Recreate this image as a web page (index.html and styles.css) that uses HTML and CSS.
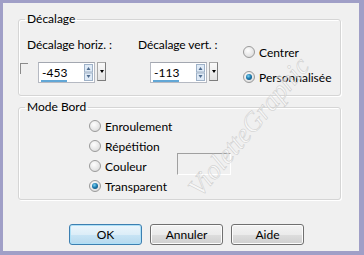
FILE: index.html
```html
<!DOCTYPE html>
<html lang="fr">
<head>
    <meta charset="UTF-8">
    <title>Décalage</title>
    <link rel="stylesheet" href="styles.css">
</head>
<body>
    <div class="dialog">
        <fieldset class="group group-offset">
            <legend>Décalage</legend>
            <div class="offset-row">
                <div class="col col-h">
                    <div class="label">Décalage horiz. :</div>
                    <div class="field-row">
                        <span class="check-corner"></span>
                        <div class="spin">
                            <div class="spin-field">
                                <span class="val">-453</span>
                                <svg class="arrows" width="9" height="17" viewBox="0 0 9 17">
                                    <rect x="0.5" y="0.5" width="8" height="7.5" fill="#dfeaf6" stroke="#9fb2c8"/>
                                    <rect x="0.5" y="9" width="8" height="7.5" fill="#dfeaf6" stroke="#9fb2c8"/>
                                    <path d="M2.5 6 L4.5 3 L6.5 6 Z" fill="#4e6b8e"/>
                                    <path d="M2.5 11 L4.5 14 L6.5 11 Z" fill="#4e6b8e"/>
                                </svg>
                            </div>
                            <span class="drop"><span class="tri"></span></span>
                        </div>
                    </div>
                </div>
                <div class="col col-v">
                    <div class="label">Décalage vert. :</div>
                    <div class="field-row">
                        <div class="spin">
                            <div class="spin-field">
                                <span class="val">-113</span>
                                <svg class="arrows" width="9" height="17" viewBox="0 0 9 17">
                                    <rect x="0.5" y="0.5" width="8" height="7.5" fill="#dfeaf6" stroke="#9fb2c8"/>
                                    <rect x="0.5" y="9" width="8" height="7.5" fill="#dfeaf6" stroke="#9fb2c8"/>
                                    <path d="M2.5 6 L4.5 3 L6.5 6 Z" fill="#4e6b8e"/>
                                    <path d="M2.5 11 L4.5 14 L6.5 11 Z" fill="#4e6b8e"/>
                                </svg>
                            </div>
                            <span class="drop"><span class="tri"></span></span>
                        </div>
                    </div>
                </div>
                <div class="col col-r">
                    <div class="opt opt-wide"><span class="radio"></span>Centrer</div>
                    <div class="opt opt-wide"><span class="radio checked"></span>Personnalisée</div>
                </div>
            </div>
        </fieldset>

        <fieldset class="group group-mode">
            <legend>Mode Bord</legend>
            <div class="mode-list">
                <div class="opt"><span class="radio"></span>Enroulement</div>
                <div class="opt"><span class="radio"></span>Répétition</div>
                <div class="opt"><span class="radio"></span><span class="opt-text">Couleur</span><span class="swatch"></span></div>
                <div class="opt"><span class="radio checked"></span>Transparent</div>
            </div>
        </fieldset>

        <div class="buttons">
            <button class="btn btn-default">OK</button>
            <button class="btn">Annuler</button>
            <button class="btn">Aide</button>
        </div>

        <span class="watermark">VioletteGraphic</span>
    </div>
</body>
</html>
```

FILE: styles.css
```css
body {
    margin: 0;
    font-family: Lato, "Noto Sans", Arial, sans-serif;
    font-size: 12px;
    color: #000;
}
.dialog {
    position: relative;
    width: 364px;
    height: 255px;
    box-sizing: border-box;
    border-style: solid;
    border-color: #a09fc7;
    border-width: 3px 5px 4px 3px;
    background: #f0f0f0;
    padding: 8px 18px 0 15px;
    overflow: hidden;
}
.group {
    margin: 0;
    padding: 0;
    border: 1px solid #d5d5d5;
    border-radius: 3px;
    box-shadow: 1px 1px 0 #fff, inset 1px 1px 0 #fff;
    min-width: 0;
}
.group legend {
    margin-left: 6px;
    padding: 0 2px;
    line-height: 16px;
}
.group-offset {
    padding: 10px 0 10px 0;
}
.offset-row {
    display: flex;
    align-items: flex-start;
}
.label {
    line-height: 16px;
    white-space: nowrap;
    letter-spacing: -0.1px;
}
.col-h {
    width: 119px;
}
.col-h .label {
    margin-left: 8px;
}
.col-v {
    width: 104px;
}
.field-row {
    display: flex;
    align-items: flex-start;
    margin-top: 9px;
}
.col-v .field-row {
    margin-left: 12px;
}
.check-corner {
    width: 7px;
    height: 10px;
    margin: 1px 10px 0 1px;
    border-top: 1px solid #8a8a8a;
    border-left: 1px solid #8a8a8a;
}
.spin {
    display: flex;
    align-items: flex-start;
}
.spin-field {
    width: 57px;
    height: 21px;
    box-sizing: border-box;
    border: 1px solid #b5b9c2;
    border-top-color: #a3a7b0;
    background: #fff;
    display: flex;
    align-items: center;
    justify-content: space-between;
    padding: 0 1px 0 2px;
}
.val {
    display: block;
    line-height: 15px;
    margin-top: 2px;
    border-bottom: 2px solid #62a7d6;
    padding-left: 1px;
}
.arrows {
    display: block;
}
.drop {
    width: 9px;
    height: 19px;
    margin-left: 2px;
    box-sizing: border-box;
    border: 1px solid #a8a8a8;
    border-right-color: #7d7d7d;
    border-bottom-color: #7d7d7d;
    background: linear-gradient(#fafafa, #e2e2e2);
    display: flex;
    align-items: center;
    justify-content: center;
}
.tri {
    width: 0;
    height: 0;
    border-left: 2.5px solid transparent;
    border-right: 2.5px solid transparent;
    border-top: 3px solid #000;
}
.col-r {
    margin-left: 1px;
    margin-top: 7px;
    display: flex;
    flex-direction: column;
    gap: 9px;
}
.opt {
    display: flex;
    align-items: center;
    height: 20px;
    white-space: nowrap;
}
.opt-wide {
    height: 16px;
}
.radio {
    position: relative;
    width: 12px;
    height: 12px;
    box-sizing: border-box;
    margin-right: 4px;
    border-radius: 50%;
    border: 1px solid #9a9a9a;
    background: radial-gradient(circle at 40% 35%, #fefefe 0%, #e6e6e6 60%, #cfcfcf 100%);
}
.radio.checked::after {
    content: "";
    position: absolute;
    left: 2px;
    top: 2px;
    width: 6px;
    height: 6px;
    border-radius: 50%;
    background: radial-gradient(circle at 40% 35%, #7fd3f3 0%, #1d7cb0 45%, #0b3e63 100%);
}
.group-mode {
    margin-top: 3px;
    padding: 1px 0 3px 0;
}
.mode-list {
    padding-left: 70px;
}
.opt-text {
    width: 72px;
}
.swatch {
    width: 54px;
    height: 22px;
    box-sizing: border-box;
    flex-shrink: 0;
    margin-top: -4px;
    border-top: 1px solid #a0a0a0;
    border-left: 1px solid #a0a0a0;
    border-right: 1px solid #fff;
    border-bottom: 1px solid #fff;
}
.buttons {
    display: flex;
    gap: 8px;
    margin: 24px 0 0 51px;
}
.btn {
    width: 73px;
    height: 21px;
    padding: 0;
    font-family: inherit;
    font-size: 12px;
    color: #000;
    border: 1px solid #707070;
    border-radius: 3px;
    background: linear-gradient(#f3f3f3 0%, #ebebeb 50%, #dddddd 51%, #cfcfcf 100%);
    box-shadow: inset 0 0 0 1px #fcfcfc;
}
.btn-default {
    border-color: #3c7fb1;
    background: linear-gradient(#ecf6fc 0%, #dcedf8 50%, #c8e4f5 51%, #b6d9ee 100%);
    box-shadow: inset 0 0 0 1px #aee0f7;
}
.watermark {
    position: absolute;
    left: 246px;
    top: 124px;
    transform: translate(-50%, -50%) rotate(-50deg);
    font-family: "Liberation Serif", serif;
    font-style: italic;
    font-size: 27px;
    color: rgba(255, 255, 255, 0.5);
    -webkit-text-stroke: 0.5px #cacaca;
    white-space: nowrap;
    pointer-events: none;
}
```
